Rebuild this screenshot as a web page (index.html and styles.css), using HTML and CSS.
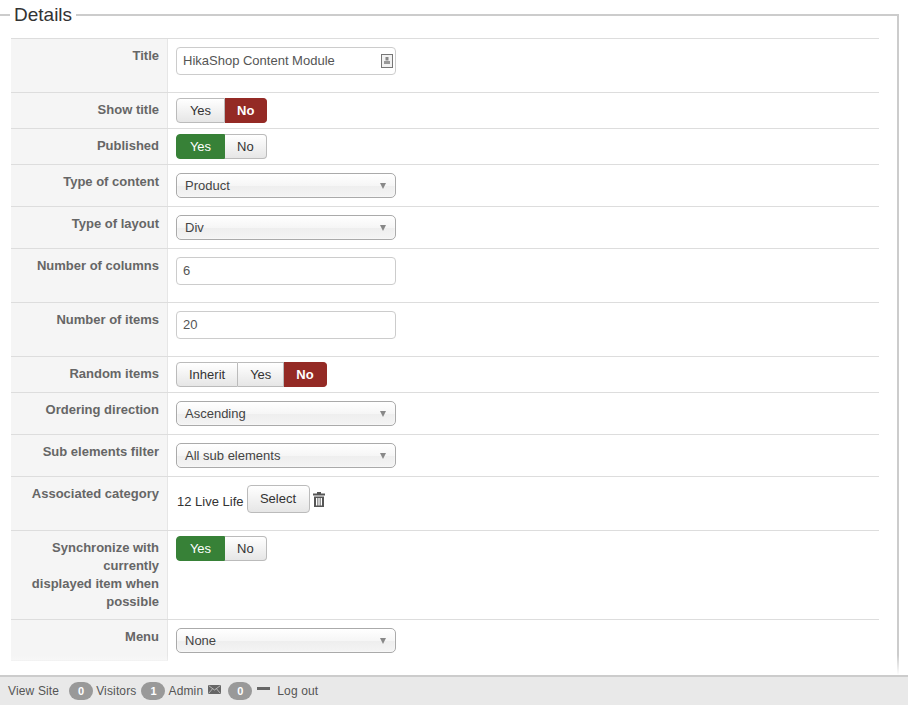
FILE: index.html
```html
<!DOCTYPE html>
<html lang="en">
<head>
<meta charset="UTF-8">
<title>HikaShop Content Module</title>
<link rel="stylesheet" href="styles.css">
</head>
<body>
<div class="page">
  <fieldset class="details">
    <legend>Details</legend>
    <div class="params">
      <div class="row">
        <div class="label">Title</div>
        <div class="value">
          <div class="input-wrap">
            <input class="text-input" type="text" value="HikaShop Content Module">
            <svg class="card-icon" width="12" height="14" viewBox="0 0 12 14">
              <rect x="0.5" y="0.5" width="11" height="13" fill="#f2f2f2" stroke="#777"/>
              <rect x="4.5" y="3" width="3" height="3.5" fill="#888"/>
              <rect x="3" y="7" width="6" height="3" fill="#999"/>
            </svg>
          </div>
        </div>
      </div>
      <div class="row">
        <div class="label">Show title</div>
        <div class="value tight">
          <div class="switch"><button class="btn">Yes</button><button class="btn no">No</button></div>
        </div>
      </div>
      <div class="row">
        <div class="label">Published</div>
        <div class="value tight">
          <div class="switch"><button class="btn yes">Yes</button><button class="btn">No</button></div>
        </div>
      </div>
      <div class="row">
        <div class="label">Type of content</div>
        <div class="value"><div class="select">Product</div></div>
      </div>
      <div class="row">
        <div class="label">Type of layout</div>
        <div class="value"><div class="select">Div</div></div>
      </div>
      <div class="row">
        <div class="label">Number of columns</div>
        <div class="value"><input class="text-input" type="text" value="6"></div>
      </div>
      <div class="row">
        <div class="label">Number of items</div>
        <div class="value"><input class="text-input" type="text" value="20"></div>
      </div>
      <div class="row">
        <div class="label">Random items</div>
        <div class="value tight">
          <div class="switch"><button class="btn">Inherit</button><button class="btn">Yes</button><button class="btn no">No</button></div>
        </div>
      </div>
      <div class="row">
        <div class="label">Ordering direction</div>
        <div class="value"><div class="select">Ascending</div></div>
      </div>
      <div class="row">
        <div class="label">Sub elements filter</div>
        <div class="value"><div class="select">All sub elements</div></div>
      </div>
      <div class="row">
        <div class="label">Associated category</div>
        <div class="value category">
          <span class="cat-name">12 Live Life</span>
          <button class="select-btn">Select</button>
          <svg class="trash-icon" width="12" height="15" viewBox="0 0 12 15">
            <path fill="#555" d="M4 0h4v1.5h4v2H0v-2h4zM1 4.5h10V15H1zM3 6v7.5h1.4V6zM5.3 6v7.5h1.4V6zM7.6 6v7.5H9V6z" fill-rule="evenodd"/>
          </svg>
        </div>
      </div>
      <div class="row">
        <div class="label">Synchronize with currently<br>displayed item when possible</div>
        <div class="value tight">
          <div class="switch"><button class="btn yes">Yes</button><button class="btn">No</button></div>
        </div>
      </div>
      <div class="row last">
        <div class="label">Menu</div>
        <div class="value"><div class="select">None</div></div>
      </div>
    </div>
  </fieldset>
</div>
<div class="status-bar">
  <span class="status-link">View Site</span>
  <span class="badge first">0</span>
  <span class="status-link">Visitors</span>
  <span class="badge">1</span>
  <span class="status-link">Admin</span>
  <svg class="mail-icon" width="13" height="9" viewBox="0 0 13 9">
    <rect width="13" height="9" fill="#666"/>
    <path d="M0.5 0.5L6.5 5L12.5 0.5M0.5 8.5L4.5 3.8M12.5 8.5L8.5 3.8" fill="none" stroke="#ccc" stroke-width="0.8"/>
  </svg>
  <span class="badge after-icon">0</span>
  <span class="minus-icon"></span>
  <span class="status-link logout">Log out</span>
</div>
</body>
</html>
```

FILE: styles.css
```css
html, body {
  margin: 0;
  padding: 0;
  height: 100%;
  overflow: hidden;
  background-color: #fff;
}

body {
  display: flex;
  flex-direction: column;
  height: 707px;
  font-family: "Liberation Sans", Arial, sans-serif;
  font-size: 13px;
  color: #555;
}

.page {
  flex: 1;
  min-height: 0;
  overflow: hidden;
  position: relative;
}

/* fade above the bottom bar */
.page::after {
  content: "";
  position: absolute;
  left: 0;
  right: 0;
  bottom: 0;
  height: 20px;
  background: linear-gradient(to bottom, rgba(255, 255, 255, 0), #fff);
}

.details {
  margin: 5px 9px 0 0;
  padding: 13px 18px 0 11px;
  border: 0;
  border-top: 2px solid #ccc;
  border-right: 2px solid #ccc;
  min-width: 0;
  height: 700px;
  box-sizing: border-box;
}

.details legend {
  margin-left: -1px;
  padding: 0 4px;
  font-size: 19px;
  line-height: 20px;
  color: #333;
}

.params {
  display: flex;
  flex-direction: column;
}

.row {
  display: flex;
  border-top: 1px solid #ddd;
}

.label {
  box-sizing: content-box;
  width: 148px;
  padding: 8px 8px 8px 0;
  border-right: 1px solid #e6e6e6;
  background-color: #f5f5f5;
  font-size: 13px;
  font-weight: bold;
  line-height: 18px;
  text-align: right;
  color: #666;
  flex-shrink: 0;
}

.value {
  flex: 1;
  padding: 8px 0 8px 8px;
}

.value.tight {
  padding: 5px 0 5px 8px;
}

.input-wrap {
  position: relative;
  width: 220px;
}

.text-input {
  display: block;
  box-sizing: border-box;
  width: 220px;
  height: 28px;
  margin-bottom: 9px;
  padding: 0 6px 2px;
  border: 1px solid #ccc;
  border-radius: 4px;
  background-color: #fff;
  font-family: inherit;
  font-size: 13px;
  color: #555;
}

.card-icon {
  position: absolute;
  top: 7px;
  right: 3px;
}

.switch {
  display: inline-flex;
}

.btn {
  height: 25px;
  padding: 0 12px;
  border: 1px solid #bbb;
  border-left-width: 0;
  background: linear-gradient(to bottom, #fff, #e6e6e6);
  font-family: inherit;
  font-size: 13px;
  color: #333;
}

.btn:first-child {
  min-width: 49px;
  border-left-width: 1px;
  border-radius: 4px 0 0 4px;
}

.btn:last-child {
  border-radius: 0 4px 4px 0;
}

.btn.no {
  border-color: #942a25;
  background: #942a25;
  font-weight: bold;
  color: #fff;
}

.btn.yes {
  border-color: #378137;
  background: #378137;
  color: #fff;
}

.select {
  position: relative;
  box-sizing: border-box;
  width: 220px;
  height: 25px;
  padding: 0 8px;
  border: 1px solid #aaa;
  border-radius: 5px;
  background: linear-gradient(to bottom, #fff 0%, #f6f6f6 50%, #eee 52%, #f4f4f4 100%);
  box-shadow: 0 0 2px #fff inset;
  font-size: 13px;
  line-height: 23px;
  color: #444;
}

.select::after {
  content: "";
  position: absolute;
  top: 9px;
  right: 9px;
  border-style: solid;
  border-width: 6px 3.5px 0;
  border-color: #888 transparent transparent;
}

.category {
  display: flex;
  align-items: flex-start;
  padding-bottom: 17px;
}

.cat-name {
  margin: 9px 3px 0 1px;
  line-height: 16px;
  font-size: 13px;
  color: #333;
}

.select-btn {
  width: 63px;
  height: 28px;
  padding: 0 0 2px;
  border: 1px solid #bbb;
  border-radius: 4px;
  background: linear-gradient(to bottom, #fff, #e6e6e6);
  font-family: inherit;
  font-size: 13px;
  color: #333;
}

.trash-icon {
  margin: 7px 0 0 3px;
}

.row.last .label {
  border-bottom: 1px solid #eee;
}

.status-bar {
  display: flex;
  align-items: center;
  box-sizing: border-box;
  height: 30px;
  margin-bottom: 2px;
  padding: 0 8px 1px;
  border-top: 2px solid #ccc;
  background-color: #e9e9e9;
  flex-shrink: 0;
}

.status-link {
  font-size: 12px;
  letter-spacing: 0.15px;
  color: #555;
}

.badge {
  width: 24px;
  height: 18px;
  margin: 0 3px 0 5px;
  border-radius: 9px;
  background-color: #999;
  font-size: 11px;
  font-weight: bold;
  line-height: 18px;
  text-align: center;
  color: #fff;
}

.badge.first {
  margin-left: 10px;
}

.badge.after-icon {
  margin: 0 5px 0 7px;
}

.mail-icon {
  margin-left: 5px;
  margin-bottom: 3px;
}

.minus-icon {
  width: 13px;
  height: 3px;
  margin-bottom: 4px;
  background-color: #666;
}

.logout {
  margin-left: 7px;
}
```
